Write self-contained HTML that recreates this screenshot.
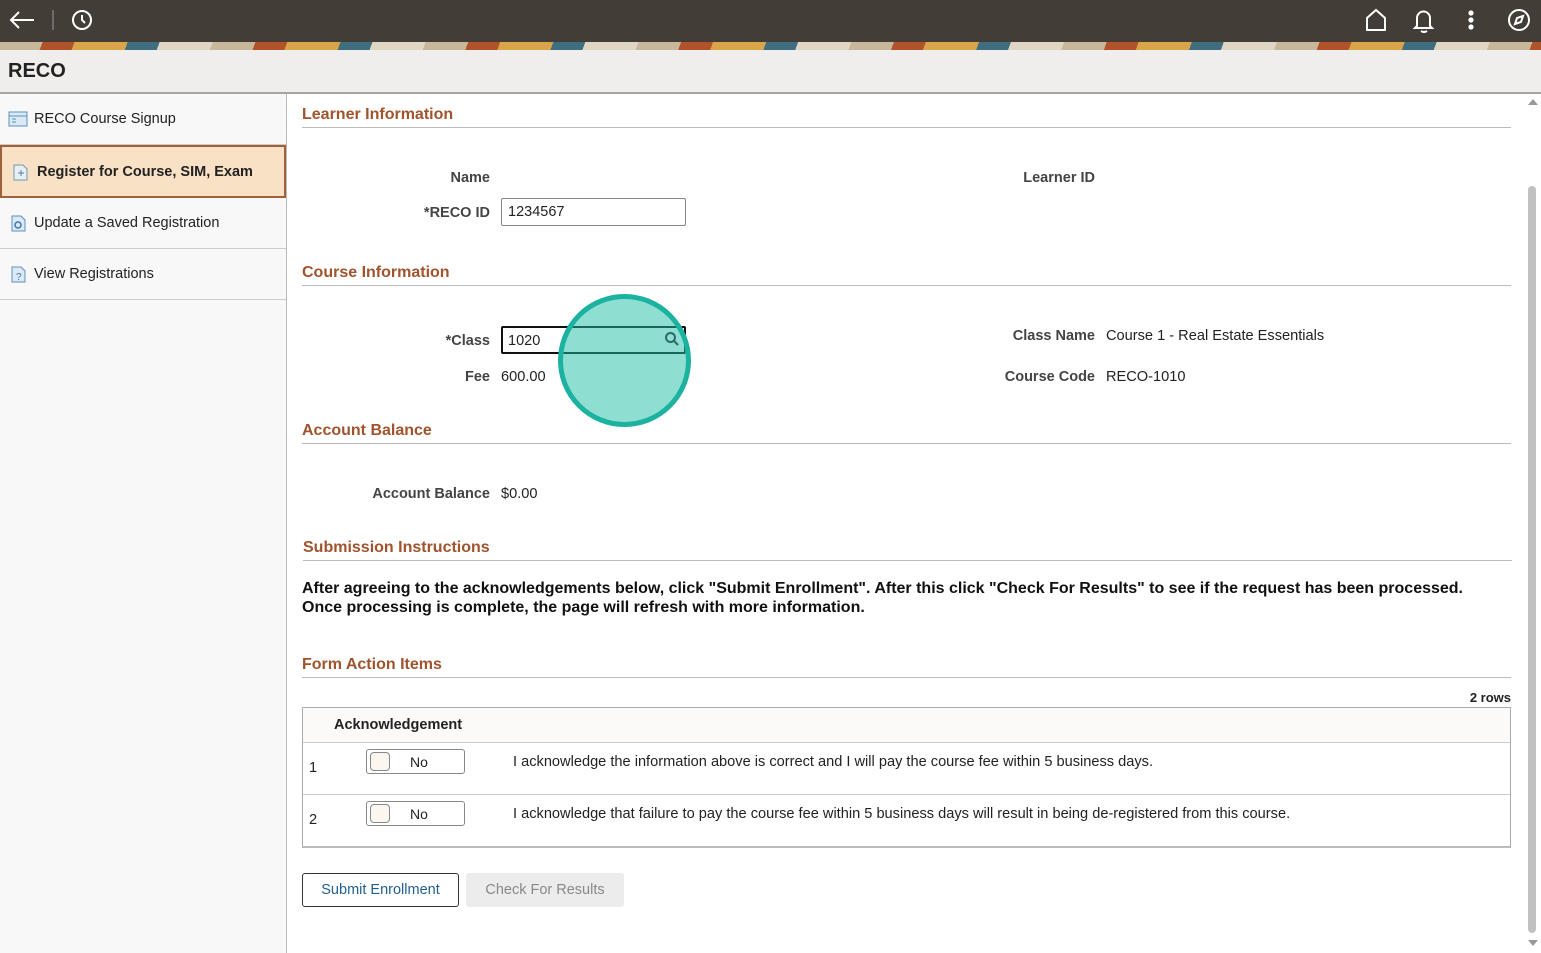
<!DOCTYPE html>
<html><head><style>
*{box-sizing:border-box;margin:0;padding:0}
body{width:1541px;height:953px;overflow:hidden;font-family:"Liberation Sans",Arial,sans-serif;font-size:14px;color:#222;background:#fff;position:relative}
.top{position:absolute;left:0;top:0;width:1541px;height:42px;background:#433d38}
.banner{position:absolute;left:0;top:42px;width:1541px;height:8px;background:repeating-linear-gradient(110deg,#c9b79c 0 40px,#b0532a 40px 70px,#d9a44a 70px 120px,#3e6e80 120px 150px,#e0d6c4 150px 200px)}
.title{position:absolute;left:0;top:50px;width:1541px;height:44px;background:#efeeed;border-bottom:2px solid #a8a39e;font-weight:bold;font-size:20px;padding:10px 8px}
.side{position:absolute;left:0;top:94px;width:287px;height:859px;background:#f8f8f8;border-right:1px solid #bbb}
.item{height:51px;border-bottom:1px solid #ccc;display:flex;align-items:center;padding-left:34px;font-size:14.5px;position:relative}
.item svg{position:absolute;left:8px}
.sel{background:#f8e1c4;border:2px solid #a0613a;font-weight:bold;height:53px;padding-left:35px}
.h{position:absolute;left:302px;width:1209px;color:#a0532c;font-weight:bold;font-size:16px;border-bottom:1px solid #bbb;padding-bottom:3px}
.l{position:absolute;font-weight:bold;color:#444;text-align:right;font-size:14.5px}
.v{position:absolute;font-size:14.6px}
.inp{position:absolute;border:1px solid #888;border-radius:2px;height:28px;padding:5px 6px;font-size:14.5px}
.btn{position:absolute;height:34px;border-radius:3px;font-size:14.5px;display:flex;align-items:center;justify-content:center}
.tog{position:absolute;left:366px;width:99px;height:25px;border:1px solid #888;border-radius:3px}
.tog i{position:absolute;left:3px;top:2px;width:20px;height:19px;border:1px solid #888;border-radius:4px;background:#fbf6f0}
.tog span{position:absolute;left:43px;top:4px}
</style></head><body>
<div class="top">
<svg width="1541" height="42" fill="none" stroke="#fff" stroke-width="2">
<path d="M34 20H11M19 12l-8 8 8 8"/><path d="M53 10v20" stroke="#999" stroke-width="1"/>
<circle cx="82" cy="20" r="9"/><path d="M82 15v5l3 3"/>
<path d="M1367 30V18l9-8 9 8v12z"/>
<path d="M1417 26v-8a6.5 6.5 0 0 1 13 0v8l2 2h-17zM1421 31q3 2 6 0"/>
<circle cx="1471" cy="13" r="1.6" fill="#fff"/><circle cx="1471" cy="20" r="1.6" fill="#fff"/><circle cx="1471" cy="27" r="1.6" fill="#fff"/>
<circle cx="1519" cy="20" r="10"/><path d="M1523 16l-2 6-6 2 2-6z"/>
</svg></div>
<div class="banner"></div>
<div class="title">RECO</div>
<div class="side">
<div class="item"><svg width="20" height="18"><rect x="1" y="2" width="18" height="14" fill="#dbe9f4" stroke="#5b8fc0"/><path d="M1 6h18M4 9h4M4 12h4" stroke="#5b8fc0"/></svg>RECO Course Signup</div>
<div class="item sel"><svg width="20" height="18"><path d="M4 2h9l4 4v11H4z" fill="#e9eef2" stroke="#6a9bb0"/><path d="M8 10h6M11 7v6" stroke="#4a86a5"/></svg>Register for Course, SIM, Exam</div>
<div class="item"><svg width="20" height="18"><path d="M4 2h9l4 4v11H4z" fill="#dbe9f4" stroke="#5b8fc0"/><circle cx="10" cy="11" r="3" fill="none" stroke="#3b78b0" stroke-width="1.5"/></svg>Update a Saved Registration</div>
<div class="item"><svg width="20" height="18"><path d="M4 2h9l4 4v11H4z" fill="#dbe9f4" stroke="#5b8fc0"/><text x="8" y="15" font-size="10" fill="#3b78b0" font-family="Liberation Sans">?</text></svg>View Registrations</div>
</div>
<div style="position:absolute;left:1528px;top:186px;width:8px;height:747px;background:#c1c1c1;border-radius:4px"></div>
<svg style="position:absolute;left:1527px;top:97px" width="12" height="10"><path d="M1 8l5-6 5 6z" fill="#999"/></svg>
<svg style="position:absolute;left:1527px;top:938px" width="12" height="10"><path d="M1 2l5 6 5-6z" fill="#999"/></svg>

<div class="h" style="top:106px">Learner Information</div>
<div class="l" style="left:380px;width:110px;top:170px">Name</div>
<div class="l" style="left:980px;width:115px;top:170px">Learner ID</div>
<div class="l" style="left:380px;width:110px;top:205px">*RECO ID</div>
<div class="inp" style="left:501px;top:198px;width:185px">1234567</div>

<div class="h" style="top:264px">Course Information</div>
<div class="l" style="left:380px;width:110px;top:333px">*Class</div>
<div class="inp" style="left:501px;top:326px;width:185px;border:2px solid #111;padding:5px 5px">1020</div>
<div class="l" style="left:380px;width:110px;top:369px">Fee</div>
<div class="v" style="left:501px;top:369px">600.00</div>
<div class="l" style="left:980px;width:115px;top:328px">Class Name</div>
<div class="v" style="left:1106px;top:328px">Course 1 - Real Estate Essentials</div>
<div class="l" style="left:980px;width:115px;top:369px">Course Code</div>
<div class="v" style="left:1106px;top:369px">RECO-1010</div>
<div style="position:absolute;left:558px;top:294px;width:133px;height:133px;border-radius:50%;background:rgba(32,190,165,.5);border:5px solid #1bb3a0"></div>
<svg style="position:absolute;left:664px;top:331px" width="16" height="16" fill="none" stroke="#2a6a66" stroke-width="2"><circle cx="6.5" cy="6.5" r="4.5"/><path d="M10 10l4 4"/></svg>

<div class="h" style="top:422px">Account Balance</div>
<div class="l" style="left:330px;width:160px;top:486px">Account Balance</div>
<div class="v" style="left:501px;top:486px">$0.00</div>

<div class="h" style="top:539px;left:303px">Submission Instructions</div>
<div style="position:absolute;left:302px;top:579px;font-weight:bold;font-size:16px;line-height:19px;color:#111">After agreeing to the acknowledgements below, click "Submit Enrollment". After this click "Check For Results" to see if the request has been processed.<br>Once processing is complete, the page will refresh with more information.</div>

<div class="h" style="top:656px">Form Action Items</div>
<div style="position:absolute;right:30px;top:690px;font-weight:bold;font-size:13px">2 rows</div>
<div style="position:absolute;left:302px;top:707px;width:1209px;height:141px;border:1px solid #aaa;border-bottom:2px solid #bbb">
<div style="height:35px;background:#fbfaf9;border-bottom:1px solid #ccc;font-weight:bold;font-size:14.5px;padding:9px 31px">Acknowledgement</div>
<div style="height:52px;border-bottom:1px solid #ccc"></div>
</div>
<div class="v" style="left:309px;top:760px">1</div>
<div class="tog" style="top:749px"><i></i><span>No</span></div>
<div class="v" style="left:513px;top:754px">I acknowledge the information above is correct and I will pay the course fee within 5 business days.</div>
<div class="v" style="left:309px;top:812px">2</div>
<div class="tog" style="top:801px"><i></i><span>No</span></div>
<div class="v" style="left:513px;top:806px">I acknowledge that failure to pay the course fee within 5 business days will result in being de-registered from this course.</div>

<div class="btn" style="left:302px;top:873px;width:157px;border:1px solid #333;color:#1f5f8f">Submit Enrollment</div>
<div class="btn" style="left:466px;top:873px;width:158px;background:#ececec;color:#888">Check For Results</div>
</body></html>
